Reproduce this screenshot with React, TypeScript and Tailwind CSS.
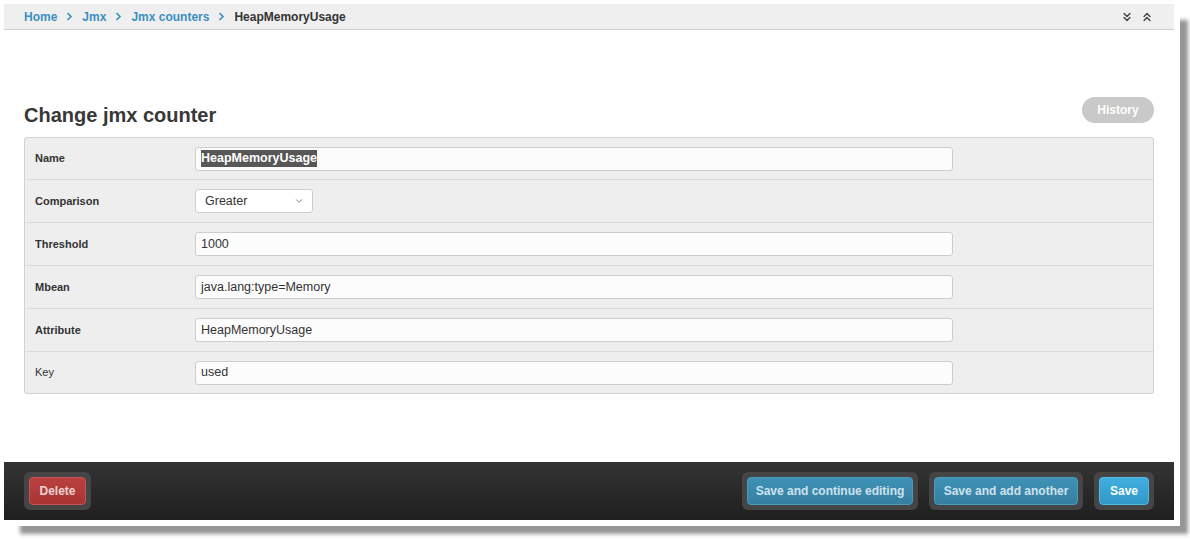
import React from "react";
import { ChevronsDown, ChevronsUp, ChevronDown } from "lucide-react";

const font = { fontFamily: '"Liberation Sans", Arial, sans-serif' };

function Sep() {
  return (
    <svg width="7" height="9" viewBox="0 0 7 9" className="shrink-0">
      <path d="M1.5 1 L5 4.5 L1.5 8" fill="none" stroke="#3b8fc0" strokeWidth="1.6" />
    </svg>
  );
}

function Row({
  label,
  required = true,
  last = false,
  h,
  children,
}: {
  label: string;
  required?: boolean;
  last?: boolean;
  h: string;
  children: React.ReactNode;
}) {
  return (
    <div
      className={
        "flex items-center " +
        h +
        " " +
        (last ? "" : "border-b border-[#dadada]")
      }
    >
      <div
        className={
          "w-[170px] pl-[10px] text-[11px] text-[#333] " +
          (required ? "font-bold" : "font-normal")
        }
      >
        {label}
      </div>
      {children}
    </div>
  );
}

function TextBox({ children }: { children: React.ReactNode }) {
  return (
    <div className="w-[758px] h-[24px] bg-[#fcfcfc] border border-[#cdcdcd] rounded-[3px] flex items-center pl-[5px] text-[12.5px] text-[#333]">
      {children}
    </div>
  );
}

function FooterBtn({
  label,
  w,
  kind,
}: {
  label: string;
  w: string;
  kind: "red" | "blue" | "bright";
}) {
  const inner =
    kind === "red"
      ? "bg-[linear-gradient(#b8413f,#a83533)] text-[#f0d2d2] border-[#c25553]"
      : kind === "blue"
      ? "bg-[linear-gradient(#3e92b6,#357fa0)] text-[#cfe2ec] border-[#4a9cbf]"
      : "bg-[linear-gradient(#40afdf,#3198c8)] text-white border-[#52b8e4]";
  return (
    <div className="bg-[#454545] rounded-[6px] p-[5px]">
      <div
        className={
          "h-[28px] rounded-[4px] border flex items-center justify-center text-[12px] font-bold " +
          inner +
          " " +
          w
        }
      >
        {label}
      </div>
    </div>
  );
}

export default function App() {
  return (
    <div className="w-[1190px] h-[540px] bg-white overflow-hidden" style={font}>
      <div className="ml-[4px] mt-[4px] w-[1170px] h-[516px] bg-white flex flex-col shadow-[0_0_0_6px_#fff,15px_15px_4px_-1px_rgba(0,0,0,0.42)]">
        {/* Breadcrumb bar */}
        <div className="h-[26px] shrink-0 bg-[#efefef] border-b border-[#cfcfcf] flex items-center justify-between pl-[20px] pr-[20px]">
          <div className="flex items-center gap-[9px] text-[12px] font-bold">
            <span className="text-[#3b8fc0]">Home</span>
            <Sep />
            <span className="text-[#3b8fc0]">Jmx</span>
            <Sep />
            <span className="text-[#3b8fc0]">Jmx counters</span>
            <Sep />
            <span className="text-[#333]">HeapMemoryUsage</span>
          </div>
          <div className="flex items-center gap-[6px] text-[#444]">
            <ChevronsDown size={14} strokeWidth={2.4} />
            <ChevronsUp size={14} strokeWidth={2.4} />
          </div>
        </div>

        {/* Main */}
        <div className="px-[20px] pt-[67px]">
          <div className="flex justify-between items-start h-[30px]">
            <h1 className="mt-[6px] text-[20px] leading-[24px] font-bold text-[#383838]">
              Change jmx counter
            </h1>
            <div className="w-[72px] h-[26px] rounded-full bg-[#c9c9c9] text-white text-[12px] font-bold flex items-center justify-center">
              History
            </div>
          </div>

          <div className="mt-[10px] bg-[#eeeeee] border border-[#d2d2d2] rounded-[3px]">
            <Row label="Name" h="h-[42px]">
              <TextBox>
                <span className="bg-[#575757] text-white font-bold leading-[17px]">HeapMemoryUsage</span>
              </TextBox>
            </Row>
            <Row label="Comparison" h="h-[43px]">
              <div className="w-[118px] h-[24px] bg-white border border-[#cdcdcd] rounded-[3px] flex items-center justify-between pl-[9px] pr-[8px] text-[12.5px] text-[#333]">
                <span>Greater</span>
                <ChevronDown size={10} strokeWidth={2} className="text-[#666]" />
              </div>
            </Row>
            <Row label="Threshold" h="h-[43px]">
              <TextBox>1000</TextBox>
            </Row>
            <Row label="Mbean" h="h-[43px]">
              <TextBox>java.lang:type=Memory</TextBox>
            </Row>
            <Row label="Attribute" h="h-[43px]">
              <TextBox>HeapMemoryUsage</TextBox>
            </Row>
            <Row label="Key" required={false} last h="h-[41px]">
              <TextBox>used</TextBox>
            </Row>
          </div>
        </div>

        <div className="flex-1" />

        {/* Footer */}
        <div className="h-[58px] shrink-0 bg-[linear-gradient(#343434,#1f1f1f)] flex items-center justify-between px-[20px]">
          <FooterBtn label="Delete" w="w-[57px]" kind="red" />
          <div className="flex items-center gap-[11px]">
            <FooterBtn label="Save and continue editing" w="w-[166px]" kind="blue" />
            <FooterBtn label="Save and add another" w="w-[144px]" kind="blue" />
            <FooterBtn label="Save" w="w-[50px]" kind="bright" />
          </div>
        </div>
      </div>
    </div>
  );
}
